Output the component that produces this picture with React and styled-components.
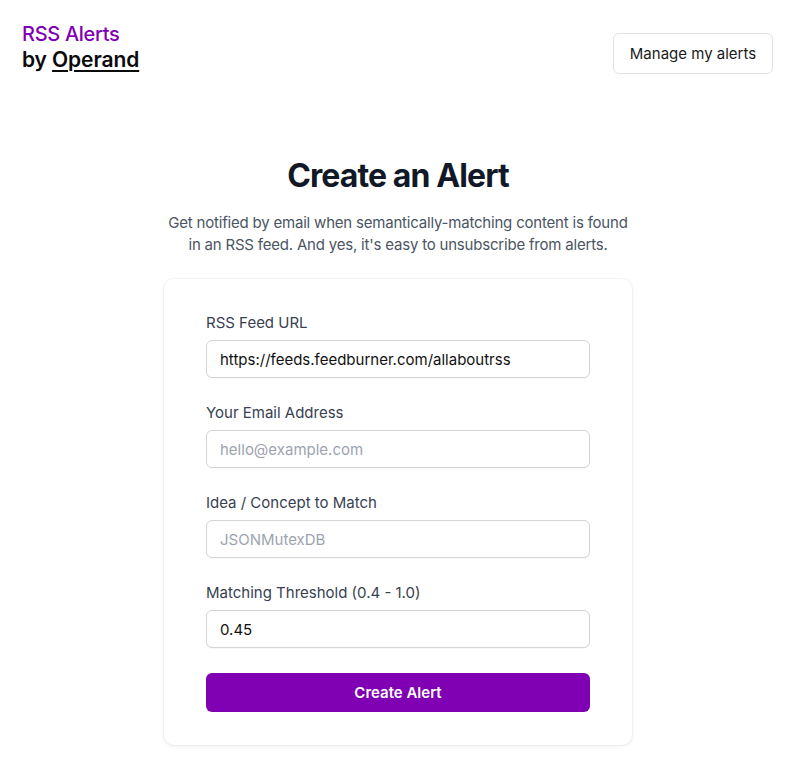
import React from "react";
import styled, { createGlobalStyle } from "styled-components";

const Global = createGlobalStyle`
  html, body { margin: 0; padding: 0; background: #ffffff; }
  body { font-family: Inter, "Noto Sans", sans-serif; color: #111827; }
  * { box-sizing: border-box; }
`;

const Page = styled.div`
  min-height: 765px;
  padding: 0 27px 20px 22px;
`;

const Header = styled.header`
  display: flex;
  justify-content: space-between;
  align-items: flex-start;
  padding-top: 22px;
`;

const Brand = styled.div`
  display: flex;
  flex-direction: column;
  line-height: 25px;
`;

const BrandName = styled.span`
  color: #8000b4;
  font-size: 20px;
  font-weight: 500;
  letter-spacing: -0.3px;
`;

const BrandBy = styled.span`
  color: #0b0b0b;
  font-size: 21px;
  font-weight: 600;
  letter-spacing: -0.1px;
  a { color: inherit; text-decoration: underline; text-underline-offset: 3px; text-decoration-thickness: 1.5px; }
`;

const GhostButton = styled.button`
  margin-top: 11px;
  width: 160px;
  height: 41px;
  background: #fff;
  border: 1.5px solid #e2e2e2;
  border-radius: 6px;
  font-family: inherit;
  font-size: 15px;
  color: #1a1a1a;
  cursor: pointer;
`;

const Main = styled.main`
  display: flex;
  flex-direction: column;
  align-items: center;
  padding-top: 82px;
  margin-right: -4px;
  margin-left: -3px;
`;

const Title = styled.h1`
  margin: 0;
  font-size: 32px;
  line-height: 40px;
  font-weight: 700;
  letter-spacing: -0.9px;
  color: #111827;
`;

const Subtitle = styled.p`
  margin: 16px 0 0;
  text-align: center;
  font-size: 15px;
  line-height: 22px;
  letter-spacing: -0.2px;
  color: #4b5563;
  width: 468px;
`;

const Card = styled.form`
  margin-top: 23px;
  width: 468px;
  background: #fff;
  border-radius: 10px;
  box-shadow: 0 1px 4px rgba(0, 0, 0, 0.08), 0 0 0 1px rgba(0, 0, 0, 0.025);
  padding: 33px 42px 33px;
  display: flex;
  flex-direction: column;
  gap: 24px;
`;

const Field = styled.label`
  display: flex;
  flex-direction: column;
  gap: 6px;
`;

const Label = styled.span`
  font-size: 15px;
  line-height: 22px;
  color: #374151;
`;

const Input = styled.input`
  height: 38px;
  border: 1px solid #d4d4d8;
  border-radius: 6px;
  padding: 0 13px;
  font-family: inherit;
  font-size: 15px;
  color: #111;
  background: #fff;
  outline: none;
  box-shadow: 0 1px 1px rgba(0, 0, 0, 0.03);
  &::placeholder { color: #9ca3af; }
`;

const Submit = styled.button`
  margin-top: 1px;
  height: 39px;
  border: none;
  border-radius: 6px;
  background: #8000b4;
  color: #fff;
  font-family: inherit;
  font-size: 15px;
  font-weight: 600;
  cursor: pointer;
`;

const fields = [
  { label: "RSS Feed URL", value: "https://feeds.feedburner.com/allaboutrss" },
  { label: "Your Email Address", placeholder: "hello@example.com" },
  { label: "Idea / Concept to Match", placeholder: "JSONMutexDB" },
  { label: "Matching Threshold (0.4 - 1.0)", value: "0.45" },
];

export default function App() {
  return (
    <>
      <Global />
      <Page>
        <Header>
          <Brand>
            <BrandName>RSS Alerts</BrandName>
            <BrandBy>
              by <a href="#">Operand</a>
            </BrandBy>
          </Brand>
          <GhostButton type="button">Manage my alerts</GhostButton>
        </Header>
        <Main>
          <Title>Create an Alert</Title>
          <Subtitle>
            Get notified by email when semantically-matching content is found in an RSS feed. And yes, it's easy to unsubscribe from alerts.
          </Subtitle>
          <Card onSubmit={(e) => e.preventDefault()}>
            {fields.map((f) => (
              <Field key={f.label}>
                <Label>{f.label}</Label>
                <Input defaultValue={f.value} placeholder={f.placeholder} />
              </Field>
            ))}
            <Submit type="submit">Create Alert</Submit>
          </Card>
        </Main>
      </Page>
    </>
  );
}
